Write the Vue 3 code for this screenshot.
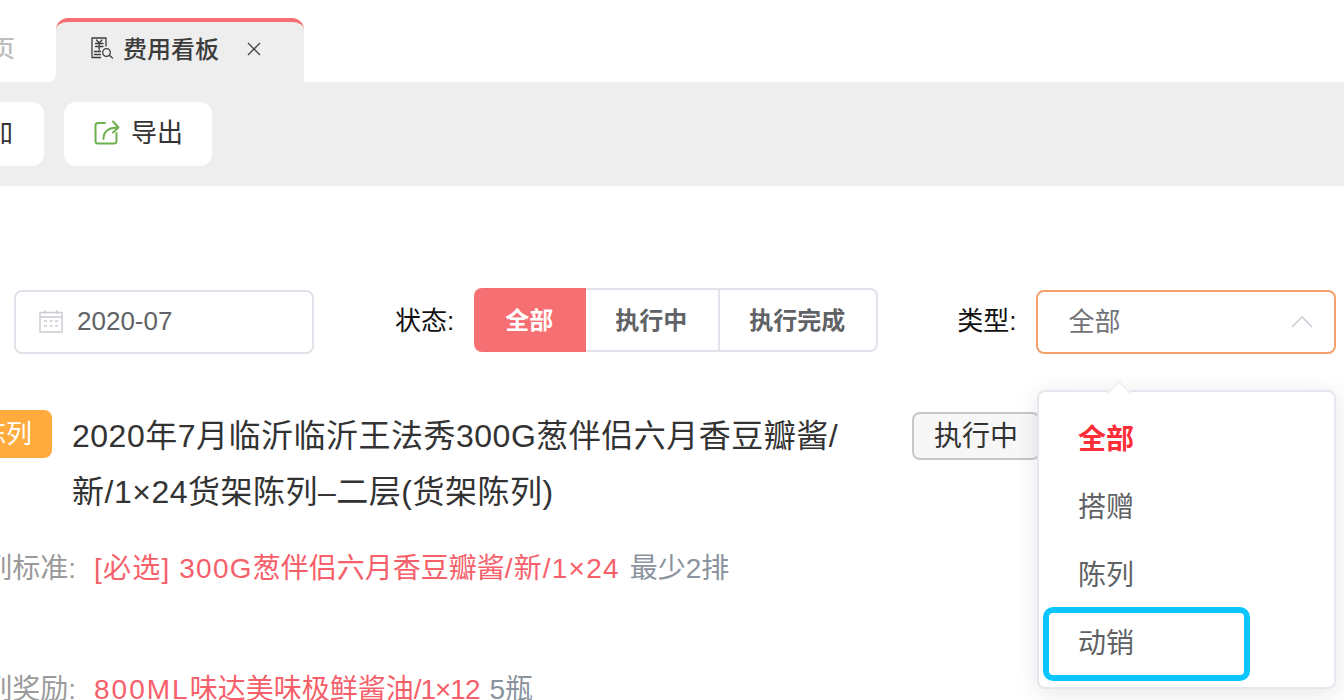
<template>
  <div class="page">
    <!-- 标签栏 -->
    <div class="tabs">
      <div class="tab-prev-wrap">
        <div class="tab-prev">首页</div>
      </div>
      <div class="tab-active">
        <svg class="tab-icon" viewBox="0 0 24 22" width="24" height="22" fill="none" stroke="#3c3c3c" stroke-width="1.300">
          <path d="M16 9.500V1H2V20.500H11" stroke-linejoin="round"/>
          <path d="M6.500 3L9.200 6L12 3M5.500 6.500H13M5.500 9.500H13M9.200 6V13" stroke-linecap="round"/>
          <path d="M4.500 14.500H10.500M4.500 17.500H10.500" stroke-linecap="round"/>
          <circle cx="16.500" cy="15.500" r="3.800"/>
          <path d="M19.300 18.300L22.500 21" stroke-linecap="round"/>
        </svg>
        <span class="tab-title">费用看板</span>
        <svg class="tab-close" viewBox="0 0 14 14" width="14" height="14" fill="none">
          <path d="M1 1L13 13M13 1L1 13" stroke="#444" stroke-width="1.300"/>
        </svg>
      </div>
    </div>

    <!-- 工具栏 -->
    <div class="toolbar">
      <button class="tool-btn tool-btn--cut">添加</button>
      <button class="tool-btn tool-btn--export">
        <svg viewBox="0 0 26 26" width="26" height="26" fill="none" stroke="#6fb04f" stroke-width="2" stroke-linecap="round" stroke-linejoin="round">
          <path d="M11 4H4C2.500 4 1.500 5 1.500 6.500V22C1.500 23.500 2.500 24.500 4 24.500H20C21.500 24.500 22.500 23.500 22.500 22V14"/>
          <path d="M9.500 20C9.500 13 13 8.500 24 8.500M19 2.500L24.500 8.500L19 13.500"/>
        </svg>
        <span>导出</span>
      </button>
    </div>

    <!-- 筛选 -->
    <div class="filters">
      <div class="date-input">
        <svg viewBox="0 0 24 24" width="24" height="24" fill="none" stroke="#c9ccd4" stroke-width="1.400">
          <path d="M1 3.500H23V23H1Z"/>
          <path d="M1 8H23M6 1V5M18 1V5"/>
          <path d="M5 12H8M10.500 12H13.500M16 12H19M5 17H8M10.500 17H13.500M16 17H19" stroke-width="1.600"/>
        </svg>
        <span>2020-07</span>
      </div>
      <span class="filter-label filter-label--status">状态:</span>
      <div class="segment">
        <span
          v-for="(s, i) in statusList"
          :key="s"
          :class="['segment-item', { 'is-active': i === 0 }]"
        >{{ s }}</span>
      </div>
      <span class="filter-label filter-label--type">类型:</span>
      <div class="select">
        <span class="select-value">全部</span>
        <svg viewBox="0 0 22 12" width="22" height="12" fill="none">
          <path d="M1 11L11 1L21 11" stroke="#c9ccd4" stroke-width="1.500"/>
        </svg>
      </div>
    </div>

    <!-- 活动内容 -->
    <div class="item-head">
      <span class="item-tag">陈列</span>
      <div class="item-title">2020年7月临沂临沂王法秀300G葱伴侣六月香豆瓣酱/<br>新/1×24货架陈列–二层(货架陈列)</div>
      <span class="item-status">执行中</span>
    </div>
    <div class="item-row item-row--std">
      <span class="row-label">陈列标准:</span>
      <span class="row-red"><span class="sp">[必选] 300G</span>葱伴侣六月香豆瓣酱<span class="sp">/新/1×24</span></span>
      <span class="row-gray">最少2排</span>
    </div>
    <div class="item-row item-row--reward">
      <span class="row-label">陈列奖励:</span>
      <span class="row-red"><span class="sp-wide">800ML</span>味达美味极鲜酱油<span class="sp-tight">/1×12</span></span>
      <span class="row-gray">5瓶</span>
    </div>

    <!-- 类型下拉 -->
    <div class="dropdown">
      <i class="dropdown-arrow"></i>
      <div
        v-for="(t, i) in typeList"
        :key="t"
        :class="['dropdown-item', { 'is-active': i === 0 }]"
      >{{ t }}</div>
    </div>
    <div class="highlight"></div>
  </div>
</template>

<script setup>
const statusList = ['全部', '执行中', '执行完成']
const typeList = ['全部', '搭赠', '陈列', '动销']
</script>

<style>
html, body { margin: 0; background: #fff; }
</style>

<style scoped>
.page {
  position: relative;
  width: 1344px;
  height: 700px;
  overflow: hidden;
  background: #fff;
  font-family: "Liberation Sans", "Noto Sans CJK SC", sans-serif;
  color: #333;
}

/* 标签栏 */
.tabs {
  display: flex;
  height: 82px;
  padding-top: 18px;
  box-sizing: border-box;
}
.tab-prev-wrap {
  width: 56px;
  background: linear-gradient(to right, #fff 0, #fff 40px, #eee 40px);
  overflow: hidden;
}
.tab-prev {
  height: 100%;
  margin-left: -48px;
  width: 104px;
  padding: 14px 0 0 15px;
  box-sizing: border-box;
  background: #fff;
  border-bottom-right-radius: 8px;
  font-size: 24px;
  line-height: 34px;
  font-weight: 500;
  color: #bdbdbd;
}
.tab-active {
  display: flex;
  align-items: center;
  width: 248px;
  height: 64px;
  box-sizing: border-box;
  padding: 0 0 10px 34px;
  background: #eee;
  border-top: 4px solid #f66f73;
  border-radius: 12px 12px 0 0;
}
.tab-icon { flex-shrink: 0; margin-top: 2px; }
.tab-title {
  margin-left: 9px;
  font-size: 24px;
  font-weight: 500;
  color: #3c3c3c;
  white-space: nowrap;
}
.tab-close { margin-left: 28px; margin-top: 4px; flex-shrink: 0; }

/* 工具栏 */
.toolbar {
  display: flex;
  gap: 20px;
  height: 104px;
  padding-top: 20px;
  box-sizing: border-box;
  background: #eee;
}
.tool-btn {
  display: flex;
  align-items: center;
  height: 64px;
  border: none;
  border-radius: 12px;
  background: #fff;
  font-family: inherit;
  font-size: 26px;
  color: #333;
  padding-bottom: 8px;
}
.tool-btn--cut {
  width: 84px;
  margin-left: -40px;
  padding-left: 0;
  padding-right: 31px;
  justify-content: flex-end;
}
.tool-btn--export {
  width: 148px;
  padding-left: 30px;
  padding-right: 0;
  gap: 11px;
}
.tool-btn--export svg { margin-top: 2px; }

/* 筛选 */
.filters {
  display: flex;
  align-items: center;
  height: 66px;
  margin-top: 102px;
  padding-left: 14px;
}
.date-input {
  display: flex;
  align-items: center;
  gap: 14px;
  width: 300px;
  height: 64px;
  margin-top: 2px;
  box-sizing: border-box;
  padding: 0 0 2px 23px;
  border: 2px solid #e0e3ea;
  border-radius: 8px;
  font-size: 26px;
  color: #606266;
}
.filter-label {
  font-size: 26px;
  line-height: 30px;
  color: #111;
  white-space: nowrap;
}
.filter-label--status { margin-left: 81px; }
.filter-label--type { margin-left: 79px; }
.segment {
  display: flex;
  height: 64px;
  margin-left: 20px;
  margin-top: -2px;
}
.segment-item {
  display: flex;
  align-items: center;
  justify-content: center;
  box-sizing: border-box;
  padding: 0 2px 4px 0;
  border: 2px solid #e0e3ea;
  border-left: none;
  font-size: 24px;
  font-weight: 700;
  color: #606266;
}
.segment-item:nth-child(1) { width: 112px; border-radius: 8px 0 0 8px; border: none; }
.segment-item:nth-child(2) { width: 134px; }
.segment-item:nth-child(3) { width: 158px; border-radius: 0 8px 8px 0; }
.segment-item.is-active { background: #f66f73; color: #fff; }
.select {
  display: flex;
  align-items: center;
  justify-content: space-between;
  width: 300px;
  height: 64px;
  margin-left: 20px;
  margin-top: 2px;
  box-sizing: border-box;
  padding: 0 21px 0 30px;
  border: 2px solid #f3a06d;
  border-radius: 8px;
  font-size: 26px;
  color: #707276;
}
.select-value { margin-top: -6px; }

/* 活动内容 */
.item-head {
  display: flex;
  align-items: flex-start;
  margin-top: 54px;
}
.item-tag {
  flex-shrink: 0;
  width: 72px;
  height: 48px;
  margin: 2px 20px 0 -20px;
  box-sizing: border-box;
  border-radius: 8px;
  background: #ffab3e;
  color: #fff;
  font-size: 26px;
  line-height: 48px;
  white-space: nowrap;
}
.item-title {
  width: 840px;
  flex-shrink: 0;
  font-size: 32px;
  letter-spacing: 0.5px;
  line-height: 56px;
  color: #333;
  white-space: nowrap;
}
.item-status {
  flex-shrink: 0;
  width: 128px;
  height: 48px;
  margin-top: 4px;
  box-sizing: border-box;
  border: 2px solid #c8c8c8;
  border-radius: 8px;
  background: #f7f7f7;
  padding-left: 20px;
  font-size: 28px;
  line-height: 46px;
  color: #333;
}
.item-row {
  display: flex;
  align-items: center;
  font-size: 28px;
  line-height: 40px;
  white-space: nowrap;
}
.item-row--std { margin-top: 29px; }
.item-row--reward { margin-top: 81px; }
.row-label {
  flex-shrink: 0;
  width: 180px;
  margin-left: -104px;
  text-align: right;
  color: #9a9a9a;
}
.row-red { margin-left: 18px; color: #f6606a; }
.row-gray { margin-left: 10px; color: #8a939e; }
.sp { letter-spacing: 1.200px; }
.sp-wide { letter-spacing: 2px; }
.sp-tight { letter-spacing: -1px; }

/* 类型下拉 */
.dropdown {
  position: absolute;
  left: 1037px;
  top: 390px;
  width: 299px;
  height: 299px;
  box-sizing: border-box;
  padding-top: 14px;
  background: #fff;
  border: 2px solid #e4e7ed;
  border-radius: 8px;
  box-shadow: 0 4px 24px rgba(0, 0, 0, 0.1);
}
.dropdown-arrow {
  position: absolute;
  left: 71px;
  top: -8px;
  width: 16px;
  height: 16px;
  background: #fff;
  border-top: 2px solid #eef0f4;
  border-left: 2px solid #eef0f4;
  transform: rotate(45deg);
}
.dropdown-item {
  position: relative;
  height: 68px;
  padding-left: 39px;
  font-size: 28px;
  line-height: 68px;
  color: #606266;
}
.dropdown-item.is-active { color: #ff2d37; font-weight: 700; }
.highlight {
  position: absolute;
  left: 1043px;
  top: 607px;
  width: 207px;
  height: 74px;
  box-sizing: border-box;
  border: 6px solid #0cc5ff;
  border-radius: 10px;
}
</style>
